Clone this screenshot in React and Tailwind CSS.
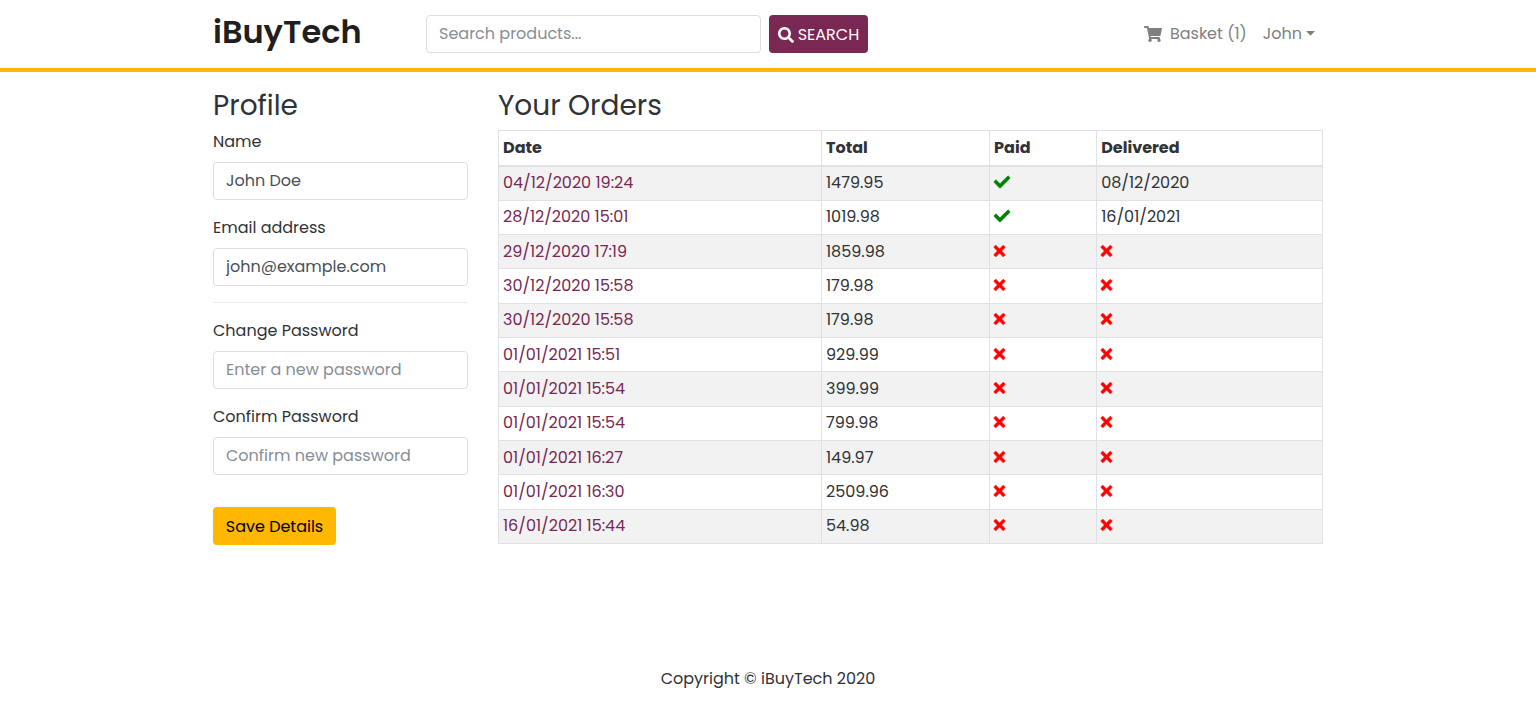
import React from "react";
import { FaCheck, FaSearch, FaShoppingCart, FaTimes } from "react-icons/fa";

const ORDERS = [
  { date: "04/12/2020 19:24", total: "1479.95", paid: true, delivered: "08/12/2020" },
  { date: "28/12/2020 15:01", total: "1019.98", paid: true, delivered: "16/01/2021" },
  { date: "29/12/2020 17:19", total: "1859.98" },
  { date: "30/12/2020 15:58", total: "179.98" },
  { date: "30/12/2020 15:58", total: "179.98" },
  { date: "01/01/2021 15:51", total: "929.99" },
  { date: "01/01/2021 15:54", total: "399.99" },
  { date: "01/01/2021 15:54", total: "799.98" },
  { date: "01/01/2021 16:27", total: "149.97" },
  { date: "01/01/2021 16:30", total: "2509.96" },
  { date: "16/01/2021 15:44", total: "54.98" },
];

const INPUT =
  "h-[38px] w-full rounded-[4px] border border-[#dadee2] bg-white px-3 pb-0.5 text-base text-[#495057] placeholder:text-[#868e96] placeholder:opacity-100";

function Header() {
  return (
    <header className="border-b-4 border-[#ffb700] bg-white">
      <div className="mx-auto flex h-[68px] max-w-[1140px] items-center px-[15px]">
        <a href="#" className="w-[213px] shrink-0 pb-1 text-[32px] leading-[48px] font-semibold text-[#1f1f1f]">
          iBuyTech
        </a>
        <form className="flex items-center gap-2" onSubmit={(e) => e.preventDefault()}>
          <div className="w-[335px]">
            <input type="search" aria-label="Search products" placeholder="Search products..." className={INPUT} />
          </div>
          <button
            type="submit"
            className="flex h-[38px] w-[99px] items-center justify-center gap-1 rounded-[4px] bg-[#782852] pt-0.5 text-base text-white"
          >
            <FaSearch className="size-4 shrink-0" />
            SEARCH
          </button>
        </form>
        <nav className="ml-auto flex items-center gap-4 pr-2 text-base text-[#808080]">
          <a href="#" className="flex items-center gap-2">
            <FaShoppingCart className="h-4 w-[18px]" />
            Basket (1)
          </a>
          <button type="button" className="flex items-center gap-1">
            John
            <svg viewBox="0 0 9 5" className="mb-0.5 h-[5px] w-[9px]" fill="currentColor" aria-hidden="true">
              <path d="M0 0h9L4.5 4.8z" />
            </svg>
          </button>
        </nav>
      </div>
    </header>
  );
}

function Field({ id, label, ...props }) {
  return (
    <div className="mb-4">
      <label htmlFor={id} className="mb-2 block leading-6">
        {label}
      </label>
      <input id={id} className={INPUT} {...props} />
    </div>
  );
}

function Profile() {
  return (
    <section className="col-span-3">
      <h2 className="mb-1.5 text-[28px] leading-9">Profile</h2>
      <form onSubmit={(e) => e.preventDefault()}>
        <Field id="name" label="Name" type="text" defaultValue="John Doe" />
        <Field id="email" label="Email address" type="email" defaultValue="john@example.com" />
        <hr className="mb-4 border-[#ececec]" />
        <Field id="password" label="Change Password" type="password" placeholder="Enter a new password" />
        <Field id="confirm" label="Confirm Password" type="password" placeholder="Confirm new password" />
        <button type="submit" className="mt-4 h-[38px] w-[123px] rounded-[4px] bg-[#ffb700] pt-0.5 text-base text-black">
          Save Details
        </button>
      </form>
    </section>
  );
}

function Cross() {
  return (
    <FaTimes
      className="mb-0.5 h-4 w-[11px] overflow-visible stroke-current text-[#ff0000]"
      strokeWidth={20}
      aria-label="No"
    />
  );
}

function Tick() {
  return (
    <FaCheck
      className="mb-0.5 size-4 overflow-visible stroke-current text-[#008000]"
      strokeWidth={20}
      aria-label="Yes"
    />
  );
}

function Orders() {
  const cell = "border border-[#dee2e6] px-1 py-1 leading-6";
  const head = "border border-b-2 border-[#dee2e6] px-1 py-1 text-left leading-6 font-bold";
  return (
    <section className="col-span-9">
      <h2 className="mb-1.5 text-[28px] leading-9">Your Orders</h2>
      <table className="h-[414px] w-full table-fixed border-collapse border border-[#dee2e6]">
        <colgroup>
          <col className="w-[39.2%]" />
          <col className="w-[20.4%]" />
          <col className="w-[13%]" />
          <col className="w-[27.4%]" />
        </colgroup>
        <thead>
          <tr className="h-[35px]">
            <th className={head}>Date</th>
            <th className={head}>Total</th>
            <th className={head}>Paid</th>
            <th className={head}>Delivered</th>
          </tr>
        </thead>
        <tbody>
          {ORDERS.map((order, i) => (
            <tr key={i} className="odd:bg-[#f2f2f2]">
              <td className={cell}>
                <a href="#" className="text-[#782852]">
                  {order.date}
                </a>
              </td>
              <td className={cell}>{order.total}</td>
              <td className={cell}>{order.paid ? <Tick /> : <Cross />}</td>
              <td className={cell}>{order.delivered ?? <Cross />}</td>
            </tr>
          ))}
        </tbody>
      </table>
    </section>
  );
}

export default function App() {
  return (
    <div className="flex min-h-screen flex-col bg-white font-['Poppins','Inter',sans-serif] text-base text-[#2f3236]">
      <Header />
      <main className="mx-auto grid w-full max-w-[1140px] grow grid-cols-12 gap-x-[30px] px-[15px] pt-4">
        <Profile />
        <Orders />
      </main>
      <footer className="pt-8 pb-[31px] text-center leading-6">Copyright © iBuyTech 2020</footer>
    </div>
  );
}
